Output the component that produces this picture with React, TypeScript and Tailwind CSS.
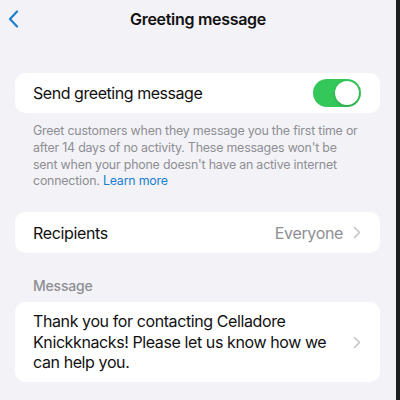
import React, { useState } from 'react';

const Chevron = () => (
  <svg width="8" height="13" viewBox="0 0 8 13" fill="none" className="shrink-0">
    <path d="M1.5 1.5L6.5 6.5L1.5 11.5" stroke="#c4c4c7" strokeWidth="1.6" strokeLinecap="round" strokeLinejoin="round" />
  </svg>
);

const GreetingMessage = () => {
  const [enabled, setEnabled] = useState(true);

  return (
    <div className="flex h-[400px] w-[400px] overflow-hidden" style={{ fontFamily: 'Inter, "Noto Sans", sans-serif' }}>
      <div className="flex-1 bg-[#f2f2f7]">
        {/* Nav bar */}
        <div className="relative flex h-[38px] items-center justify-center">
          <button className="absolute left-[8px] top-[10px]">
            <svg width="11" height="18" viewBox="0 0 11 18" fill="none">
              <path d="M9 1.5L2 9L9 16.5" stroke="#1a7fd1" strokeWidth="2.2" strokeLinecap="round" strokeLinejoin="round" />
            </svg>
          </button>
          <h1 className="text-[16px] font-semibold tracking-[-0.3px] text-[#111]">Greeting message</h1>
        </div>

        <div className="mt-[35px] px-[15px] pr-[16px]">
          {/* Toggle row */}
          <div className="flex h-[40px] items-center justify-between rounded-[10px] bg-white pl-[18px] pr-[19px]">
            <span className="text-[16px] tracking-[-0.45px] text-[#111]">Send greeting message</span>
            <button
              onClick={() => setEnabled(!enabled)}
              className={`flex h-[28px] w-[48px] items-center rounded-full p-[2px] ${enabled ? 'justify-end bg-[#34c759]' : 'justify-start bg-[#e5e5ea]'}`}
            >
              <span className="h-[24px] w-[24px] rounded-full bg-white shadow-[0_1px_3px_rgba(0,0,0,0.2)]" />
            </button>
          </div>

          <p className="mt-[10px] whitespace-nowrap pl-[18px] text-[12.4px] leading-[16.8px] tracking-[-0.2px] text-[#8e8e93]">
            Greet customers when they message you the first time or
            <br />
            after 14 days of no activity. These messages won't be
            <br />
            sent when your phone doesn't have an active internet
            <br />
            connection. <span className="text-[#1a7fd1]">Learn more</span>
          </p>

          {/* Recipients */}
          <div className="mt-[22px] flex h-[41px] items-center justify-between rounded-[10px] bg-white pl-[18px] pr-[19px]">
            <span className="text-[16px] tracking-[-0.35px] text-[#111]">Recipients</span>
            <div className="flex items-center gap-[10px]">
              <span className="text-[16px] tracking-[-0.35px] text-[#8e8e93]">Everyone</span>
              <Chevron />
            </div>
          </div>

          <div className="mt-[22px] pl-[18px] text-[14px] font-medium tracking-[-0.2px] text-[#8e8e93]">Message</div>

          {/* Message body */}
          <div className="mt-[6px] flex h-[80px] items-center justify-between rounded-[10px] bg-white pl-[18px] pr-[19px]">
            <p className="whitespace-nowrap text-[16px] leading-[20.5px] tracking-[-0.4px] text-[#111]">
              Thank you for contacting Celladore
              <br />
              Knickknacks! Please let us know how we
              <br />
              can help you.
            </p>
            <Chevron />
          </div>
        </div>
      </div>
      <div className="w-[4px] bg-[#1c1f1c]" />
    </div>
  );
};

export default function App() {
  return <GreetingMessage />;
}
